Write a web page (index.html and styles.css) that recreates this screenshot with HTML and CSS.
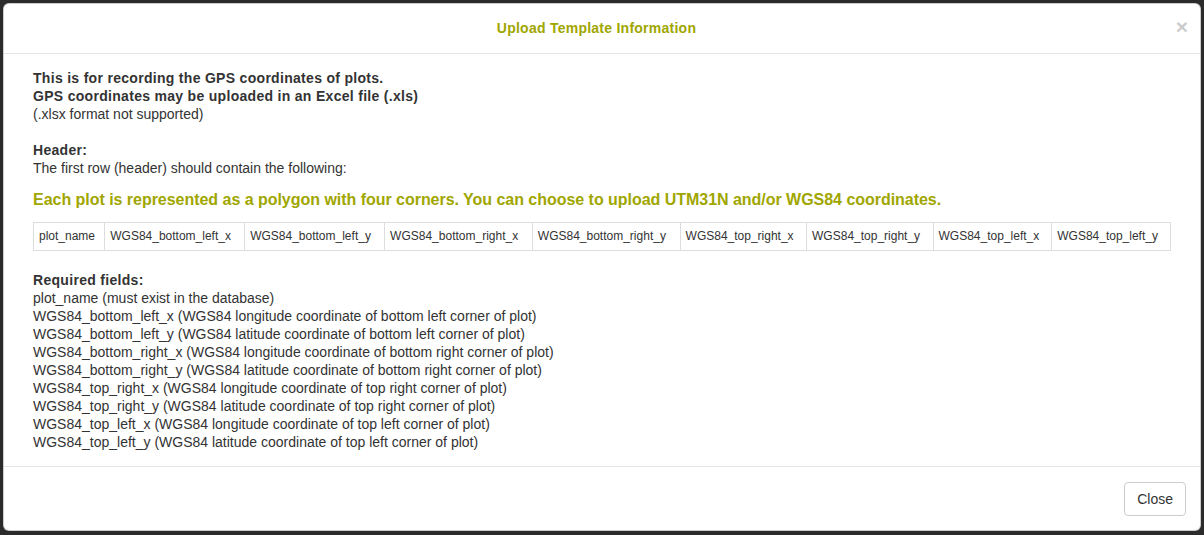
FILE: index.html
```html
<!DOCTYPE html>
<html>
<head>
<meta charset="utf-8">
<link rel="stylesheet" href="styles.css">
</head>
<body>
<div class="backdrop">
  <div class="modal">
    <div class="modal-header">
      <h4 class="modal-title">Upload Template Information</h4>
      <span class="close">&times;</span>
    </div>
    <div class="modal-body">
      <b>This is for recording the GPS coordinates of plots.</b><br>
      <b>GPS coordinates may be uploaded in an Excel file (.xls)</b><br>
      (.xlsx format not supported)<br><br>
      <b>Header:</b><br>
      The first row (header) should contain the following:<br>
      <h4 class="accent">Each plot is represented as a polygon with four corners. You can choose to upload UTM31N and/or WGS84 coordinates.</h4>
      <table class="cols">
        <tr>
          <td>plot_name</td>
          <td>WGS84_bottom_left_x</td>
          <td>WGS84_bottom_left_y</td>
          <td>WGS84_bottom_right_x</td>
          <td>WGS84_bottom_right_y</td>
          <td>WGS84_top_right_x</td>
          <td>WGS84_top_right_y</td>
          <td>WGS84_top_left_x</td>
          <td>WGS84_top_left_y</td>
        </tr>
      </table>
      <b>Required fields:</b><br>
      plot_name (must exist in the database)<br>
      WGS84_bottom_left_x (WGS84 longitude coordinate of bottom left corner of plot)<br>
      WGS84_bottom_left_y (WGS84 latitude coordinate of bottom left corner of plot)<br>
      WGS84_bottom_right_x (WGS84 longitude coordinate of bottom right corner of plot)<br>
      WGS84_bottom_right_y (WGS84 latitude coordinate of bottom right corner of plot)<br>
      WGS84_top_right_x (WGS84 longitude coordinate of top right corner of plot)<br>
      WGS84_top_right_y (WGS84 latitude coordinate of top right corner of plot)<br>
      WGS84_top_left_x (WGS84 longitude coordinate of top left corner of plot)<br>
      WGS84_top_left_y (WGS84 latitude coordinate of top left corner of plot)
    </div>
    <div class="modal-footer">
      <button class="btn">Close</button>
    </div>
  </div>
</div>
</body>
</html>
```
FILE: styles.css
```css
html, body {
  margin: 0;
  padding: 0;
  height: 100%;
  background: #2b2b2b;
}
body {
  font-family: "Liberation Sans", Arial, sans-serif;
  font-size: 14px;
  line-height: 18px;
  color: #333;
}
b {
  letter-spacing: 0.3px;
}
.backdrop {
  padding: 3px 3px 0 3px;
}
.modal {
  background: #fff;
  border-radius: 6px;
  border: 1px solid rgba(0,0,0,0.2);
  overflow: hidden;
}
.modal-header {
  position: relative;
  padding: 14px 26px 15px 15px;
  border-bottom: 1px solid #e5e5e5;
  text-align: center;
}
.modal-title {
  margin: 0;
  font-size: 14px;
  line-height: 20px;
  font-weight: bold;
  letter-spacing: 0.25px;
  color: #9fa600;
}
.close {
  position: absolute;
  right: 12px;
  top: 11px;
  font-size: 21px;
  font-weight: bold;
  line-height: 24px;
  color: #000;
  opacity: 0.2;
}
.modal-body {
  padding: 15px 29px 15px 29px;
}
.accent {
  margin: 14px 0 13px 0;
  font-size: 16px;
  line-height: 18px;
  font-weight: bold;
  letter-spacing: -0.03px;
  color: #9fa600;
}
.cols {
  width: 100%;
  border-collapse: collapse;
  margin-bottom: 20px;
  font-size: 12px;
  line-height: 17px;
}
.cols td {
  border: 1px solid #ddd;
  padding: 5px;
  white-space: nowrap;
}
.modal-footer {
  padding: 15px 14px 14px 15px;
  border-top: 1px solid #e5e5e5;
  display: flex;
  justify-content: flex-end;
}
.btn {
  font-family: "Liberation Sans", Arial, sans-serif;
  font-size: 14px;
  line-height: 20px;
  padding: 6px 12px;
  color: #333;
  background: #fff;
  border: 1px solid #ccc;
  border-radius: 4px;
}
```
